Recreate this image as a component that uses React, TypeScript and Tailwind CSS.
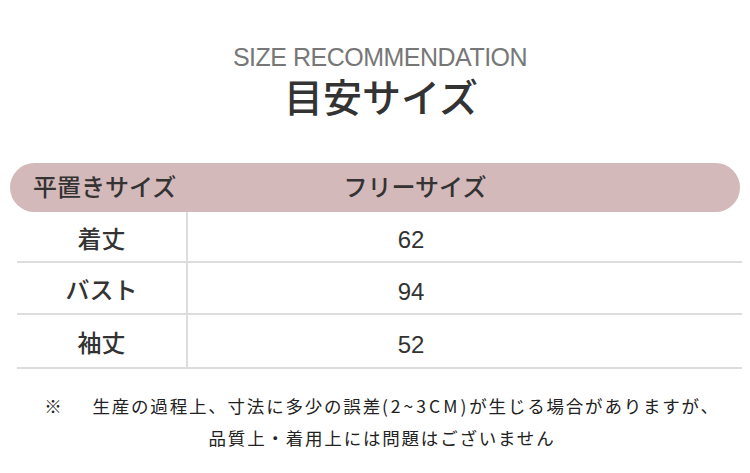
const rows = [
  { label: "着丈", value: "62", h: "h-[51px]" },
  { label: "バスト", value: "94", h: "h-[52px]" },
  { label: "袖丈", value: "52", h: "h-[54px]" },
];

export default function App() {
  return (
    <div
      className="w-[750px] h-[473px] bg-white overflow-hidden flex flex-col items-center"
      style={{ fontFamily: '"Liberation Sans", "Noto Sans CJK JP", sans-serif' }}
    >
      {/* heading */}
      <div className="mt-[42px] pl-[10px] text-[25px] leading-[30px] tracking-[-0.5px] text-[#777]">
        SIZE RECOMMENDATION
      </div>
      <h1 className="mt-[4px] pl-[12px] text-[39px] leading-none font-medium text-[#333] font-['Noto_Sans_CJK_JP',sans-serif]">
        目安サイズ
      </h1>

      {/* size table */}
      <div className="mt-[48px] w-full text-[24px] text-[#333]">
        <div className="mx-[10px] h-[49px] rounded-full bg-[#d3b9ba] grid grid-cols-[178px_1fr] items-center font-medium">
          <div className="pl-[23px]">平置きサイズ</div>
          <div className="pr-[98px] text-center">フリーサイズ</div>
        </div>
        {rows.map((row) => (
          <div
            key={row.label}
            className={`ml-[17px] mr-[8px] grid grid-cols-[171px_1fr] border-b-2 border-[#dddddd] ${row.h}`}
          >
            <div className="flex items-center justify-center pt-[6px] border-r-2 border-[#dddddd] font-medium">
              {row.label}
            </div>
            <div className="flex items-center justify-center pt-[7px] pr-[108px]">{row.value}</div>
          </div>
        ))}
      </div>

      {/* note */}
      <div className="mt-[21px] pl-[14px] flex flex-col items-center text-[17.5px] leading-[32px] tracking-[1.8px] text-[#222] font-['Noto_Sans_CJK_JP',sans-serif]">
        <div className="flex">
          <span className="mr-[29px]">※</span>
          <span>
            生産の過程上、寸法に多少の誤差<span className="tracking-[3px]">(2~3CM)</span>が生じる場合がありますが、
          </span>
        </div>
        <div>品質上・着用上には問題はございません</div>
      </div>
    </div>
  );
}
